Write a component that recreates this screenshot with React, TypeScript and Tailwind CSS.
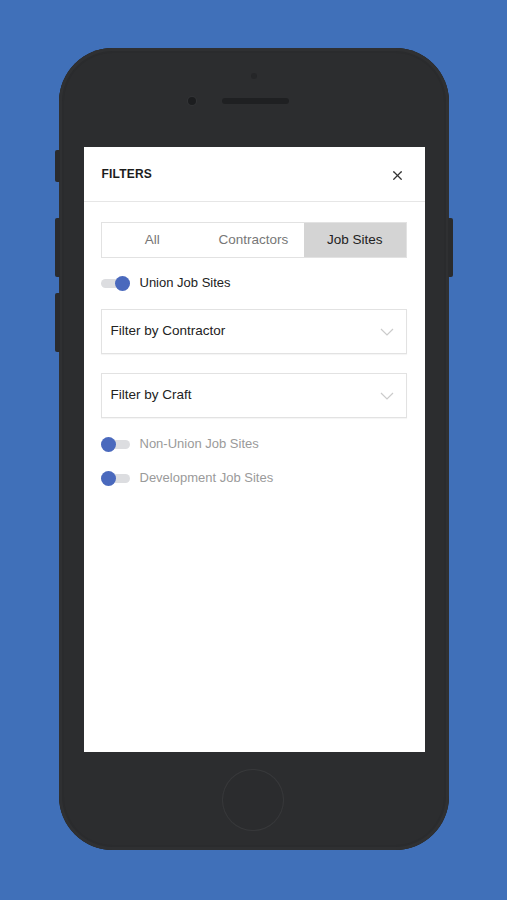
import { X } from "lucide-react";

const font = { fontFamily: '"Liberation Sans", Arial, sans-serif' };

function Toggle({ on }: { on: boolean }) {
  return (
    <div className="relative h-[15px] w-[29px] shrink-0">
      <div className="absolute left-0 right-0 top-[3px] h-[9px] rounded-full bg-[#dcdde0]" />
      <div
        className={
          on
            ? "absolute right-0 top-0 h-[15px] w-[15px] rounded-full bg-[#4a69bd]"
            : "absolute left-0 top-0 h-[15px] w-[15px] rounded-full bg-[#4a69bd]"
        }
      />
    </div>
  );
}

function ToggleRow({ on, label }: { on: boolean; label: string }) {
  return (
    <div className="flex h-[20px] items-center gap-[10px]">
      <Toggle on={on} />
      <span className={on ? "text-[13px] text-[#222]" : "text-[13px] text-[#9a9a9a]"}>
        {label}
      </span>
    </div>
  );
}

function Select({ label }: { label: string }) {
  return (
    <div className="flex h-[45px] items-center justify-between border border-[#e2e2e2] pl-[9px] pr-[12px] shadow-[0_1px_1px_rgba(0,0,0,0.04)]">
      <span className="text-[13.5px] text-[#222]">{label}</span>
      <svg width="14" height="8" viewBox="0 0 14 8" fill="none" className="mt-[1px]">
        <polyline points="1,1 7,7 13,1" stroke="#cbcbcb" strokeWidth="1.2" />
      </svg>
    </div>
  );
}

function FiltersScreen() {
  const tabs = ["All", "Contractors", "Job Sites"];
  return (
    <div className="flex h-[605px] w-[341px] flex-col bg-white" style={font}>
      <div className="flex h-[55px] items-center justify-between border-b border-[#e6e6e6] pl-[18px] pr-[20px]">
        <span className="text-[12px] font-bold tracking-[0.2px] text-[#1c1c1c]">FILTERS</span>
        <X size={15} strokeWidth={2} className="mt-[3px] text-[#333]" />
      </div>
      <div className="flex flex-col pl-[17px] pr-[18px] pt-[20px]">
        <div className="grid h-[36px] grid-cols-3 border border-[#e2e2e2]">
          {tabs.map((t, i) => (
            <div
              key={t}
              className={
                i === 2
                  ? "flex items-center justify-center bg-[#d4d4d4] text-[13.5px] text-[#222]"
                  : "flex items-center justify-center text-[13.5px] text-[#777]"
              }
            >
              {t}
            </div>
          ))}
        </div>
        <div className="mt-[15px]">
          <ToggleRow on label="Union Job Sites" />
        </div>
        <div className="mt-[16px]">
          <Select label="Filter by Contractor" />
        </div>
        <div className="mt-[19px]">
          <Select label="Filter by Craft" />
        </div>
        <div className="mt-[16px]">
          <ToggleRow on={false} label="Non-Union Job Sites" />
        </div>
        <div className="mt-[14px]">
          <ToggleRow on={false} label="Development Job Sites" />
        </div>
      </div>
    </div>
  );
}

export default function App() {
  return (
    <div className="flex h-[900px] w-full justify-center bg-[#4070b9] pt-[48px]">
      <div className="relative h-[802px] w-[390px]">
        {/* side buttons */}
        <div className="absolute left-[-4px] top-[102px] h-[32px] w-[5px] rounded-l-[2px] bg-[#2a2b2d]" />
        <div className="absolute left-[-4px] top-[170px] h-[59px] w-[5px] rounded-l-[2px] bg-[#2a2b2d]" />
        <div className="absolute left-[-4px] top-[245px] h-[59px] w-[5px] rounded-l-[2px] bg-[#2a2b2d]" />
        <div className="absolute right-[-4px] top-[170px] h-[59px] w-[5px] rounded-r-[2px] bg-[#2a2b2d]" />

        <div className="flex h-full w-full flex-col rounded-[54px] bg-[#2c2d2f] shadow-[inset_0_0_0_3px_#2f3032,inset_0_0_0_5px_#2a2b2d]">
          <div className="relative h-[99px] shrink-0">
            <div className="absolute left-[192px] top-[25px] h-[6px] w-[6px] rounded-full bg-[#252628]" />
            <div className="absolute left-[129px] top-[49px] h-[8px] w-[8px] rounded-full bg-[#1c1d1f] shadow-[0_0_0_1px_#333436]" />
            <div className="absolute left-[163px] top-[50px] h-[6px] w-[67px] rounded-full bg-[#1f2022]" />
          </div>
          <div className="ml-[25px]">
            <FiltersScreen />
          </div>
          <div className="flex flex-1 items-center justify-center pb-[2px] pr-[2px]">
            <div className="h-[60px] w-[60px] rounded-full bg-[#2b2c2e] shadow-[0_0_0_1px_#38393b]" />
          </div>
        </div>
      </div>
    </div>
  );
}
